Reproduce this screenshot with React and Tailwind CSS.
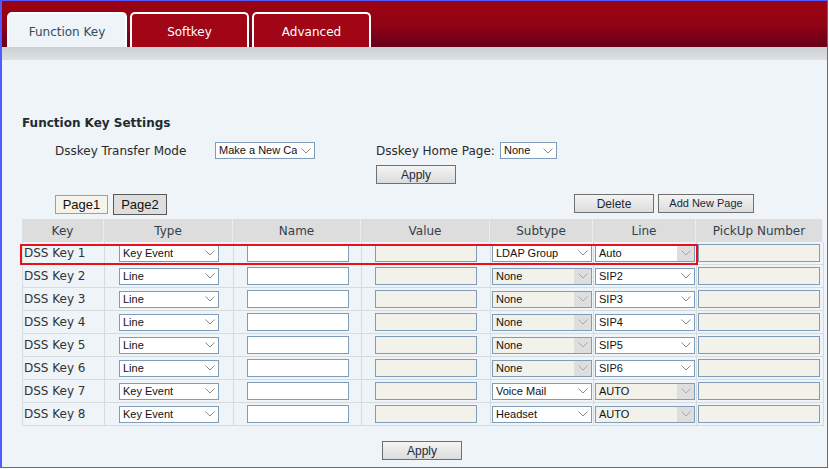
import React from "react";

const rows = [
  { key: "DSS Key 1", type: "Key Event", sub: "LDAP Group", subOff: false, line: "Auto", lineArrow: true },
  { key: "DSS Key 2", type: "Line", sub: "None", subOff: true, line: "SIP2" },
  { key: "DSS Key 3", type: "Line", sub: "None", subOff: true, line: "SIP3" },
  { key: "DSS Key 4", type: "Line", sub: "None", subOff: true, line: "SIP4" },
  { key: "DSS Key 5", type: "Line", sub: "None", subOff: true, line: "SIP5" },
  { key: "DSS Key 6", type: "Line", sub: "None", subOff: true, line: "SIP6" },
  { key: "DSS Key 7", type: "Key Event", sub: "Voice Mail", subOff: false, line: "AUTO", lineOff: true },
  { key: "DSS Key 8", type: "Key Event", sub: "Headset", subOff: false, line: "AUTO", lineOff: true },
];

function Chevron({ light }) {
  return (
    <svg width="10" height="6" viewBox="0 0 10 6" fill="none">
      <polyline points="0.5,0.5 5,5 9.5,0.5" stroke={light ? "#a8a8a8" : "#8a8a8a"} strokeWidth="1" />
    </svg>
  );
}

function Select({ value, width = "w-[100px]", off = false, grayArrow = false }) {
  const bg = off ? "bg-[#f3f2ea]" : "bg-white";
  const arrowBg = off || grayArrow ? "bg-[#dedede]" : "";
  return (
    <div className={`flex h-[17px] ${width} ${bg} border border-[#7f9db9]`}>
      <span className="flex-1 overflow-hidden whitespace-nowrap pl-[3px] text-[11px] leading-[15px] text-[#111]" style={{ fontFamily: "'Liberation Sans', Arial, sans-serif" }}>
        {value}
      </span>
      <span className={`flex w-[17px] items-center justify-center ${arrowBg}`}>
        <Chevron light={off || grayArrow} />
      </span>
    </div>
  );
}

function Btn({ children, className = "" }) {
  return (
    <div
      className={`flex h-[19px] items-center justify-center border border-[#707070] bg-gradient-to-b from-[#f4f4f4] to-[#dcdcdc] text-[12px] text-[#1c2a38] ${className}`}
      style={{ fontFamily: "'Liberation Sans', Arial, sans-serif" }}
    >
      {children}
    </div>
  );
}

const cell = "flex h-[23px] items-center justify-center border-r border-b border-[#d6dbde]";

export default function App() {
  return (
    <div className="h-[469px] w-[829px] bg-white" style={{ fontFamily: "'DejaVu Sans', Verdana, sans-serif" }}>
      <div className="flex h-[468px] w-[828px] flex-col overflow-hidden border-y border-r border-l-2 border-[#4f5dff] bg-[#eef4f7]">
        {/* Header with tabs */}
        <div className="flex h-[46px] items-end gap-[3px] bg-gradient-to-b from-[#9b0313] via-[#920314] to-[#68001a] pl-[5px]">
          <div className="flex h-[35px] w-[120px] items-center justify-center rounded-t-[5px] border-2 border-b-0 border-white bg-[#eef4f7] pt-[3px] text-[12px] text-[#2f4d63]">
            Function Key
          </div>
          <div className="flex h-[35px] w-[119px] items-center justify-center rounded-t-[5px] border-2 border-b-0 border-white bg-[#a00616] pt-[3px] text-[12px] text-white">
            Softkey
          </div>
          <div className="flex h-[35px] w-[119px] items-center justify-center rounded-t-[5px] border-2 border-b-0 border-white bg-[#a00616] pt-[3px] text-[12px] text-white">
            Advanced
          </div>
        </div>
        <div className="h-[13px] bg-gradient-to-b from-[#cdd0d2] to-[#dde1e3]" />

        {/* Content */}
        <div className="flex flex-col pl-[20px]">
          <div className="mt-[55px] text-[12px] leading-[16px] font-bold text-[#1f2a33]">Function Key Settings</div>

          <div className="mt-[11px] flex h-[17px] items-center text-[12px] text-[#2a2a2a]">
            <span className="ml-[33px] w-[160px]">Dsskey Transfer Mode</span>
            <Select value="Make a New Call" />
            <span className="ml-[61px] w-[124px]">Dsskey Home Page:</span>
            <Select value="None" width="w-[57px]" />
          </div>

          <div className="mt-[6px] flex">
            <Btn className="ml-[354px] w-[80px]">Apply</Btn>
          </div>

          <div className="mt-[10px] flex h-[21px] items-start">
            <div className="ml-[33px] mt-[1px] flex h-[19px] w-[53px] items-center justify-center border border-[#8ba3bd] bg-[#f6f4e8] text-[13px] text-[#111]" style={{ fontFamily: "'Liberation Sans', Arial, sans-serif" }}>
              Page1
            </div>
            <div className="ml-[5px] flex h-[21px] w-[54px] items-center justify-center border border-[#5a5a5a] bg-[#dedede] text-[13px] text-[#111]" style={{ fontFamily: "'Liberation Sans', Arial, sans-serif" }}>
              Page2
            </div>
            <Btn className="ml-[407px] w-[80px]">Delete</Btn>
            <Btn className="ml-[4px] w-[96px] !text-[11px]">Add New Page</Btn>
          </div>

          {/* Table */}
          <div className="relative mt-[4px] w-[801px]">
            <div className="grid grid-cols-[82px_129px_128px_129px_103px_103px_127px] text-[12px] text-[#34404c]">
              {["Key", "Type", "Name", "Value", "Subtype", "Line", "PickUp Number"].map((h) => (
                <div key={h} className="flex h-[23px] items-center justify-center border-r border-[#e9ecee] bg-[#dddddd]">
                  {h}
                </div>
              ))}
            </div>
            {rows.map((r) => (
              <div key={r.key} className="grid grid-cols-[82px_129px_128px_129px_103px_103px_127px] border-l border-[#d6dbde]">
                <div className={`${cell} !justify-start pl-[1px] text-[12px] text-[#333]`}>{r.key}</div>
                <div className={cell}>
                  <Select value={r.type} />
                </div>
                <div className={cell}>
                  <div className="h-[18px] w-[102px] border border-[#7f9db9] bg-white" />
                </div>
                <div className={cell}>
                  <div className="h-[18px] w-[102px] border border-[#7f9db9] bg-[#f3f2ea]" />
                </div>
                <div className={`${cell} !justify-end pr-[1px]`}>
                  <Select value={r.sub} off={r.subOff} />
                </div>
                <div className={`${cell} !justify-end pr-[1px]`}>
                  <Select value={r.line} off={r.lineOff} grayArrow={r.lineArrow} />
                </div>
                <div className={`${cell} !justify-start pl-[1px]`}>
                  <div className="h-[18px] w-[122px] border border-[#7f9db9] bg-[#f3f2ea]" />
                </div>
              </div>
            ))}
            <div className="pointer-events-none absolute left-[-2px] top-[25px] h-[21px] w-[678px] border-2 border-[#e8101c]" />
          </div>

          <div className="mt-[15px] flex">
            <Btn className="ml-[360px] w-[80px]">Apply</Btn>
          </div>
        </div>
      </div>
    </div>
  );
}
